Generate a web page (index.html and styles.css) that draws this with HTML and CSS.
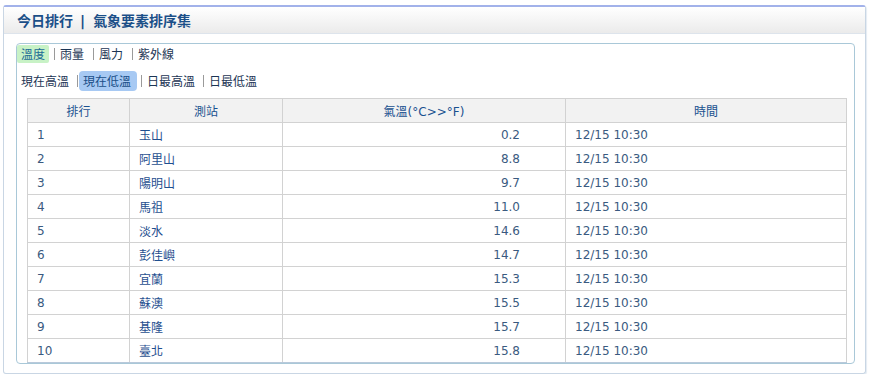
FILE: index.html
```html
<!DOCTYPE html>
<html lang="zh-Hant">
<head>
<meta charset="utf-8">
<title>今日排行</title>
<link rel="stylesheet" href="styles.css">
</head>
<body>
<div class="panel">
  <div class="panel-head">今日排行<span class="head-sep">|</span>氣象要素排序集</div>
  <div class="panel-body">
    <div class="inner">
      <div class="tabs tabs-main">
        <span class="tab active-green">溫度</span><span class="sep"></span><span class="tab">雨量</span><span class="sep"></span><span class="tab">風力</span><span class="sep"></span><span class="tab">紫外線</span>
      </div>
      <div class="tabs tabs-sub">
        <span class="tab">現在高溫</span><span class="sep"></span><span class="tab active-blue">現在低溫</span><span class="sep"></span><span class="tab">日最高溫</span><span class="sep"></span><span class="tab">日最低溫</span>
      </div>
      <table class="rank">
        <colgroup>
          <col class="c1"><col class="c2"><col class="c3"><col class="c4">
        </colgroup>
        <thead>
          <tr><th>排行</th><th>測站</th><th>氣溫(°C&gt;&gt;°F)</th><th>時間</th></tr>
        </thead>
        <tbody>
          <tr><td class="num">1</td><td class="name">玉山</td><td class="val">0.2</td><td class="time">12/15 10:30</td></tr>
          <tr><td class="num">2</td><td class="name">阿里山</td><td class="val">8.8</td><td class="time">12/15 10:30</td></tr>
          <tr><td class="num">3</td><td class="name">陽明山</td><td class="val">9.7</td><td class="time">12/15 10:30</td></tr>
          <tr><td class="num">4</td><td class="name">馬祖</td><td class="val">11.0</td><td class="time">12/15 10:30</td></tr>
          <tr><td class="num">5</td><td class="name">淡水</td><td class="val">14.6</td><td class="time">12/15 10:30</td></tr>
          <tr><td class="num">6</td><td class="name">彭佳嶼</td><td class="val">14.7</td><td class="time">12/15 10:30</td></tr>
          <tr><td class="num">7</td><td class="name">宜蘭</td><td class="val">15.3</td><td class="time">12/15 10:30</td></tr>
          <tr><td class="num">8</td><td class="name">蘇澳</td><td class="val">15.5</td><td class="time">12/15 10:30</td></tr>
          <tr><td class="num">9</td><td class="name">基隆</td><td class="val">15.7</td><td class="time">12/15 10:30</td></tr>
          <tr><td class="num">10</td><td class="name">臺北</td><td class="val">15.8</td><td class="time">12/15 10:30</td></tr>
        </tbody>
      </table>
    </div>
  </div>
</div>
</body>
</html>
```
FILE: styles.css
```css
html, body {
  margin: 0;
  padding: 0;
  background: #ffffff;
}
body {
  font-family: "DejaVu Sans", "Noto Sans CJK TC", sans-serif;
  font-size: 12px;
  color: #2a4a70;
}
.panel {
  box-sizing: border-box;
  width: 863px;
  margin: 5px 0 0 3px;
  border: 1px solid #c9d6e4;
  border-top: 2px solid #a2b2ea;
  border-radius: 3px;
  box-shadow: 1px 1px 1px #e4ecf3;
}
.panel-head {
  height: 26px;
  line-height: 26px;
  padding-left: 13px;
  font-family: "Noto Sans CJK TC", sans-serif;
  font-size: 14px;
  font-weight: bold;
  color: #1b4f88;
  background: linear-gradient(#ffffff, #ebebeb);
  border-bottom: 1px solid #dde4ec;
}
.head-sep {
  display: inline-block;
  margin: 0 8px 0 7px;
  font-family: "DejaVu Sans", sans-serif;
  font-weight: bold;
}
.panel-body {
  padding: 9px 10px 9px 12px;
}
.inner {
  border: 1px solid #a9c8d8;
  border-radius: 4px;
  padding: 0 7px 0 10px;
}
.tabs {
  display: flex;
  align-items: center;
  font-family: "Noto Sans CJK TC", sans-serif;
  font-size: 12px;
  color: #1c3554;
  margin-left: -10px;
}
.tabs-main {
  height: 19px;
}
.tabs-sub {
  height: 20px;
  margin-top: 8px;
}
.tab {
  display: block;
  line-height: 18px;
  padding: 0 4px;
}
.tabs-sub .tab {
  line-height: 20px;
  padding: 0 4px 0 4px;
}
.sep {
  display: block;
  width: 1px;
  height: 12px;
  background: #9a9a9a;
  margin: 0 1px 0 5px;
}
.tabs-sub .sep {
  margin: 0 1px 0 4px;
}
.active-green {
  background: #c8f2c6;
  color: #1c6b95;
  border-radius: 2px;
}
.tabs-sub .active-blue {
  background: #a7c9f3;
  color: #1a4f88;
  border-radius: 4px;
  padding: 0 6px 0 4px;
}
.rank {
  margin-top: 7px;
  width: 819px;
  border-collapse: collapse;
  table-layout: fixed;
}
.c1 { width: 102px; }
.c2 { width: 153px; }
.c3 { width: 283px; }
.c4 { width: 281px; }
.rank th, .rank td {
  border: 1px solid #d2d2d2;
  height: 24px;
  padding: 0;
  box-sizing: border-box;
}
.rank th {
  background: #f2f2f2;
  font-weight: normal;
  font-family: "Noto Sans CJK TC", sans-serif;
  color: #1a5190;
  text-align: center;
}
.rank th:nth-child(3) {
  font-family: "DejaVu Sans", "Noto Sans CJK TC", sans-serif;
}
.rank tbody tr:last-child td {
  border-bottom-color: #b9c9da;
}
.num, .time {
  padding-left: 9px !important;
  color: #3a5a80;
}
.name {
  padding-left: 9px !important;
  font-family: "Noto Sans CJK TC", sans-serif;
  color: #1f4f8f;
}
.val {
  text-align: right;
  padding-right: 45px !important;
  color: #3a5a80;
}
```
